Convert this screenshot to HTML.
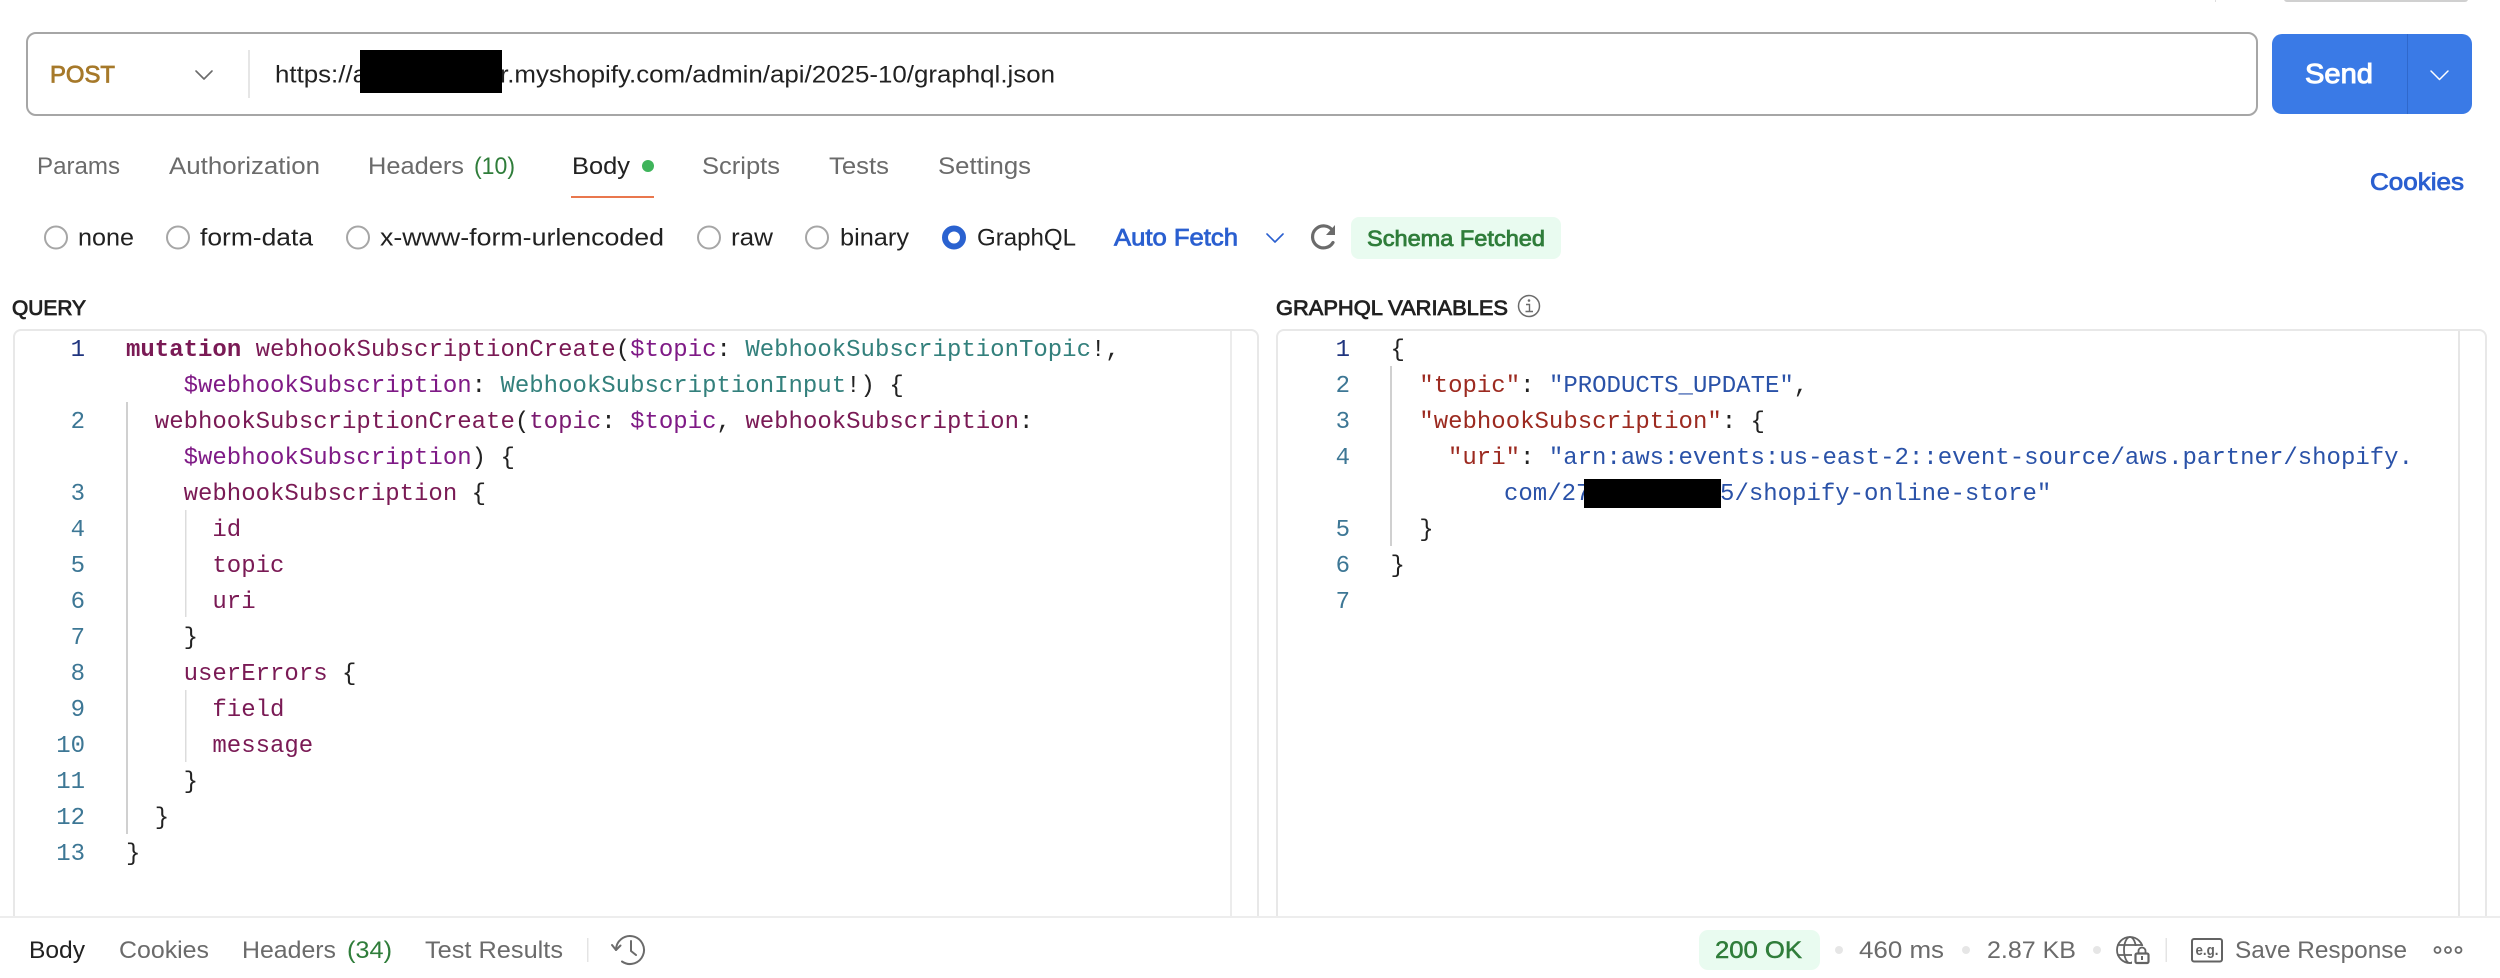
<!DOCTYPE html>
<html><head><meta charset="utf-8"><title>Postman</title>
<style>
html,body{margin:0;padding:0;background:#fff;width:2500px;height:978px;overflow:hidden}
svg{display:block}
text{font-family:"Liberation Sans",sans-serif;font-size:24px;white-space:pre}
.g{fill:#6b6b6b}
.d{fill:#212121}
.m{stroke-width:.8;stroke:currentColor;paint-order:stroke}
.c text,text.c{font-family:"Liberation Mono",monospace;font-size:24px}
.n{fill:#3d7795;text-anchor:end}
.k{fill:#7a1a55}.v{fill:#7f1a86}.t{fill:#33807c}.p{fill:#222}.jk{fill:#9c2a20}.js{fill:#2a52a8}
.ic{fill:none;stroke-linecap:round;stroke-linejoin:round}
</style></head><body>
<svg width="2500" height="978" viewBox="0 0 2500 978" xmlns="http://www.w3.org/2000/svg">
<rect width="2500" height="978" fill="#fff"/>
<!-- top remnants -->
<rect x="2215" y="0" width="1" height="2" fill="#ddd"/>
<rect x="2284" y="-6" width="184" height="8" rx="3" fill="#d0d0d0"/>

<!-- URL bar -->
<rect x="27" y="33" width="2230" height="82" rx="9" fill="#fff" stroke="#a6a6a6" stroke-width="2"/>
<text x="50" y="82.500" textLength="65" lengthAdjust="spacingAndGlyphs" class="m" style="fill:#a6792a;color:#a6792a">POST</text>
<path class="ic" d="M196 71l8 8 8-8" stroke="#6b6b6b" stroke-width="1.600"/>
<rect x="248" y="50" width="2" height="48" fill="#e6e6e6"/>
<text x="275" y="82.500" textLength="92" lengthAdjust="spacingAndGlyphs" class="d">https://a</text>
<text x="500" y="82.500" textLength="555" lengthAdjust="spacingAndGlyphs" class="d">r.myshopify.com/admin/api/2025-10/graphql.json</text>
<rect x="360" y="50" width="142" height="43" fill="#000"/>

<!-- Send -->
<rect x="2272" y="34" width="200" height="80" rx="10" fill="#3a7ae6"/>
<rect x="2407" y="34" width="1" height="80" fill="#2f68cc"/>
<text x="2305" y="83" textLength="68" lengthAdjust="spacingAndGlyphs" class="m" style="font-size:28px;fill:#fff;color:#fff;stroke-width:1">Send</text>
<path class="ic" d="M2431 71l8.500 8.500 8.500-8.500" stroke="#fff" stroke-width="1.500"/>

<!-- Tabs -->
<text x="37" y="174" textLength="83" lengthAdjust="spacingAndGlyphs" class="g">Params</text>
<text x="169" y="174" textLength="151" lengthAdjust="spacingAndGlyphs" class="g">Authorization</text>
<text x="368" y="174" textLength="96" lengthAdjust="spacingAndGlyphs" class="g">Headers</text>
<text x="474" y="174" textLength="41" lengthAdjust="spacingAndGlyphs" style="fill:#2f7d3a">(10)</text>
<text x="572" y="174" textLength="58" lengthAdjust="spacingAndGlyphs" class="d">Body</text>
<ellipse cx="648" cy="166" rx="6" ry="6" fill="#3fb45b"/>
<rect x="571" y="196" width="83" height="2" fill="#e9774d"/>
<text x="702" y="174" textLength="78" lengthAdjust="spacingAndGlyphs" class="g">Scripts</text>
<text x="829" y="174" textLength="60" lengthAdjust="spacingAndGlyphs" class="g">Tests</text>
<text x="938" y="174" textLength="93" lengthAdjust="spacingAndGlyphs" class="g">Settings</text>
<text x="2370" y="190" textLength="94" lengthAdjust="spacingAndGlyphs" class="m" style="fill:#2a5fd0;color:#2a5fd0">Cookies</text>

<!-- Radios -->
<g fill="#fff" stroke="#a6a6a6" stroke-width="2">
<circle cx="56" cy="237.500" r="11"/><circle cx="178" cy="237.500" r="11"/><circle cx="358" cy="237.500" r="11"/><circle cx="709" cy="237.500" r="11"/><circle cx="817" cy="237.500" r="11"/>
</g>
<circle cx="954" cy="237.500" r="9" fill="#fff" stroke="#2a62d0" stroke-width="6"/>
<text x="78" y="245.500" textLength="56" lengthAdjust="spacingAndGlyphs" class="d">none</text>
<text x="200" y="245.500" textLength="113" lengthAdjust="spacingAndGlyphs" class="d">form-data</text>
<text x="380" y="245.500" textLength="284" lengthAdjust="spacingAndGlyphs" class="d">x-www-form-urlencoded</text>
<text x="731" y="245.500" textLength="42" lengthAdjust="spacingAndGlyphs" class="d">raw</text>
<text x="840" y="245.500" textLength="69" lengthAdjust="spacingAndGlyphs" class="d">binary</text>
<text x="977" y="245.500" textLength="99" lengthAdjust="spacingAndGlyphs" class="d">GraphQL</text>
<text x="1114" y="245.500" textLength="124" lengthAdjust="spacingAndGlyphs" class="m" style="fill:#2a5fd0;color:#2a5fd0">Auto Fetch</text>
<path class="ic" d="M1267 234l8 8 8-8" stroke="#2a5fd0" stroke-width="1.600"/>
<path class="ic" d="M1332.500 230.500a11 11 0 1 0 0.500 12" stroke="#6b6b6b" stroke-width="3.200"/>
<path d="M1335 225v10h-9z" fill="#6b6b6b"/>
<rect x="1351" y="217" width="210" height="42" rx="8" fill="#e9fbf0"/>
<text x="1367" y="246" textLength="178" lengthAdjust="spacingAndGlyphs" class="m" style="font-size:22px;fill:#2f7d3a;color:#2f7d3a">Schema Fetched</text>

<!-- Section labels -->
<text x="12" y="315" textLength="74" lengthAdjust="spacingAndGlyphs" class="m d" style="font-size:21px;color:#212121">QUERY</text>
<text x="1276" y="315" textLength="232" lengthAdjust="spacingAndGlyphs" class="m d" style="font-size:21px;color:#212121">GRAPHQL VARIABLES</text>
<circle cx="1529" cy="306" r="10.500" fill="none" stroke="#6b6b6b" stroke-width="1.500"/>
<circle cx="1529" cy="300.500" r="1.300" fill="#6b6b6b"/>
<path d="M1526 304.500h3.500v7M1525.500 311.500h7.500" fill="none" stroke="#6b6b6b" stroke-width="1.400"/>

<!-- Panels -->
<path d="M14 916V337a7 7 0 0 1 7-7H1251a7 7 0 0 1 7 7V916" fill="#fff" stroke="#e8e8e8" stroke-width="2"/>
<path d="M1277 916V337a7 7 0 0 1 7-7H2479a7 7 0 0 1 7 7V916" fill="#fff" stroke="#e8e8e8" stroke-width="2"/>
<rect x="1230" y="331" width="2" height="585" fill="#ececec"/>
<rect x="2458" y="331" width="2" height="585" fill="#e6e6e6"/>

<!-- Guides -->
<rect x="126" y="402" width="2" height="432" fill="#d0d0d0"/>
<rect x="185" y="510" width="1.500" height="107" fill="#dcdcdc"/>
<rect x="185" y="690" width="1.500" height="72" fill="#dcdcdc"/>
<rect x="1390" y="366" width="2" height="180" fill="#d0d0d0"/>

<g class="c" transform="translate(0 -1)">
<!-- Left line numbers -->
<text x="85" y="357" class="n" style="fill:#20357f">1</text>
<text x="85" y="429" class="n">2</text>
<text x="85" y="501" class="n">3</text>
<text x="85" y="537" class="n">4</text>
<text x="85" y="573" class="n">5</text>
<text x="85" y="609" class="n">6</text>
<text x="85" y="645" class="n">7</text>
<text x="85" y="681" class="n">8</text>
<text x="85" y="717" class="n">9</text>
<text x="85" y="753" class="n">10</text>
<text x="85" y="789" class="n">11</text>
<text x="85" y="825" class="n">12</text>
<text x="85" y="861" class="n">13</text>

<!-- Query code -->
<text x="126" y="357"><tspan class="k" font-weight="700">mutation</tspan><tspan class="k"> webhookSubscriptionCreate</tspan><tspan class="p">(</tspan><tspan class="v">$topic</tspan><tspan class="p">: </tspan><tspan class="t">WebhookSubscriptionTopic</tspan><tspan class="p">!,</tspan></text>
<text x="183.600" y="393"><tspan class="v">$webhookSubscription</tspan><tspan class="p">: </tspan><tspan class="t">WebhookSubscriptionInput</tspan><tspan class="p">!) {</tspan></text>
<text x="154.800" y="429"><tspan class="k">webhookSubscriptionCreate</tspan><tspan class="p">(</tspan><tspan class="v" style="fill:#7a1a70">topic</tspan><tspan class="p">: </tspan><tspan class="v">$topic</tspan><tspan class="p">, </tspan><tspan class="k">webhookSubscription</tspan><tspan class="p">:</tspan></text>
<text x="183.600" y="465"><tspan class="v">$webhookSubscription</tspan><tspan class="p">) {</tspan></text>
<text x="183.600" y="501"><tspan class="k">webhookSubscription</tspan><tspan class="p"> {</tspan></text>
<text x="212.400" y="537" class="k">id</text>
<text x="212.400" y="573" class="k">topic</text>
<text x="212.400" y="609" class="k">uri</text>
<text x="183.600" y="645" class="p">}</text>
<text x="183.600" y="681"><tspan class="k">userErrors</tspan><tspan class="p"> {</tspan></text>
<text x="212.400" y="717" class="k">field</text>
<text x="212.400" y="753" class="k">message</text>
<text x="183.600" y="789" class="p">}</text>
<text x="154.800" y="825" class="p">}</text>
<text x="126" y="861" class="p">}</text>

<!-- Right line numbers -->
<text x="1350" y="357" class="n" style="fill:#20357f">1</text>
<text x="1350" y="393" class="n">2</text>
<text x="1350" y="429" class="n">3</text>
<text x="1350" y="465" class="n">4</text>
<text x="1350" y="537" class="n">5</text>
<text x="1350" y="573" class="n">6</text>
<text x="1350" y="609" class="n">7</text>

<!-- Variables code -->
<text x="1390.500" y="357" class="p">{</text>
<text x="1419.300" y="393"><tspan class="jk">"topic"</tspan><tspan class="p">: </tspan><tspan class="js">"PRODUCTS_UPDATE"</tspan><tspan class="p">,</tspan></text>
<text x="1419.300" y="429"><tspan class="jk">"webhookSubscription"</tspan><tspan class="p">: {</tspan></text>
<text x="1448" y="465"><tspan class="jk">"uri"</tspan><tspan class="p">: </tspan><tspan class="js">"arn:aws:events:us-east-2::event-source/aws.partner/shopify.</tspan></text>
<text x="1504" y="501" class="js">com/27         5/shopify-online-store"</text>
<text x="1419.300" y="537" class="p">}</text>
<text x="1390.500" y="573" class="p">}</text>
</g>
<rect x="1584" y="479" width="137" height="29" fill="#000"/>

<!-- Bottom bar -->
<rect x="0" y="916" width="2500" height="2" fill="#ededed"/>
<text x="29" y="958" textLength="56" lengthAdjust="spacingAndGlyphs" class="d">Body</text>
<text x="119" y="958" textLength="90" lengthAdjust="spacingAndGlyphs" class="g">Cookies</text>
<text x="242" y="958" textLength="94" lengthAdjust="spacingAndGlyphs" class="g">Headers</text>
<text x="347" y="958" textLength="45" lengthAdjust="spacingAndGlyphs" style="fill:#2f7d3a">(34)</text>
<text x="425" y="958" textLength="138" lengthAdjust="spacingAndGlyphs" class="g">Test Results</text>
<rect x="587" y="938" width="1.500" height="24" fill="#e4e4e4"/>
<path class="ic" d="M616 950a14 14 0 1 1 6 11.500" stroke="#6b6b6b" stroke-width="2"/>
<path class="ic" d="M612 945l4 5 4.500-4.500" stroke="#6b6b6b" stroke-width="2"/>
<path class="ic" d="M631 941v10l5 4" stroke="#6b6b6b" stroke-width="2"/>

<rect x="1699" y="930" width="121" height="40" rx="9" fill="#e9fbf0"/>
<text x="1715" y="958" textLength="87" lengthAdjust="spacingAndGlyphs" class="m" style="fill:#2f7d3a;color:#2f7d3a;stroke-width:.5">200 OK</text>
<circle cx="1839" cy="950" r="4" fill="#e6e6e6"/>
<text x="1859" y="958" textLength="85" lengthAdjust="spacingAndGlyphs" class="g">460 ms</text>
<circle cx="1966" cy="950" r="4" fill="#e6e6e6"/>
<text x="1987" y="958" textLength="89" lengthAdjust="spacingAndGlyphs" class="g">2.87 KB</text>
<circle cx="2097" cy="950" r="4" fill="#e6e6e6"/>
<!-- globe lock -->
<g class="ic" stroke="#636363" stroke-width="1.800">
<circle cx="2130" cy="950" r="13"/>
<ellipse cx="2130" cy="950" rx="6" ry="13"/>
<path d="M2118 945h24M2118 955h24"/>
</g>
<rect x="2132" y="946" width="20" height="20" fill="#fff"/>
<rect x="2135.500" y="953.500" width="13" height="9.500" rx="1.500" fill="#fff" stroke="#636363" stroke-width="2.200"/>
<path d="M2138.500 953v-2a3.500 3.500 0 0 1 7 0v2" fill="none" stroke="#636363" stroke-width="1.800"/>
<rect x="2141" y="956" width="2" height="4" fill="#636363"/>
<rect x="2165.500" y="938" width="1.500" height="24" fill="#e4e4e4"/>
<rect x="2192" y="939" width="30" height="22.500" rx="2" fill="none" stroke="#636363" stroke-width="2"/>
<text x="2195.500" y="955" textLength="23" lengthAdjust="spacingAndGlyphs" style="font-size:15px;fill:#636363;font-weight:700">e.g.</text>
<text x="2235" y="958" textLength="172" lengthAdjust="spacingAndGlyphs" class="g">Save Response</text>
<g fill="none" stroke="#6b6b6b" stroke-width="1.800">
<circle cx="2437.500" cy="950" r="3"/><circle cx="2448" cy="950" r="3"/><circle cx="2458.500" cy="950" r="3"/>
</g>
</svg>
</body></html>
